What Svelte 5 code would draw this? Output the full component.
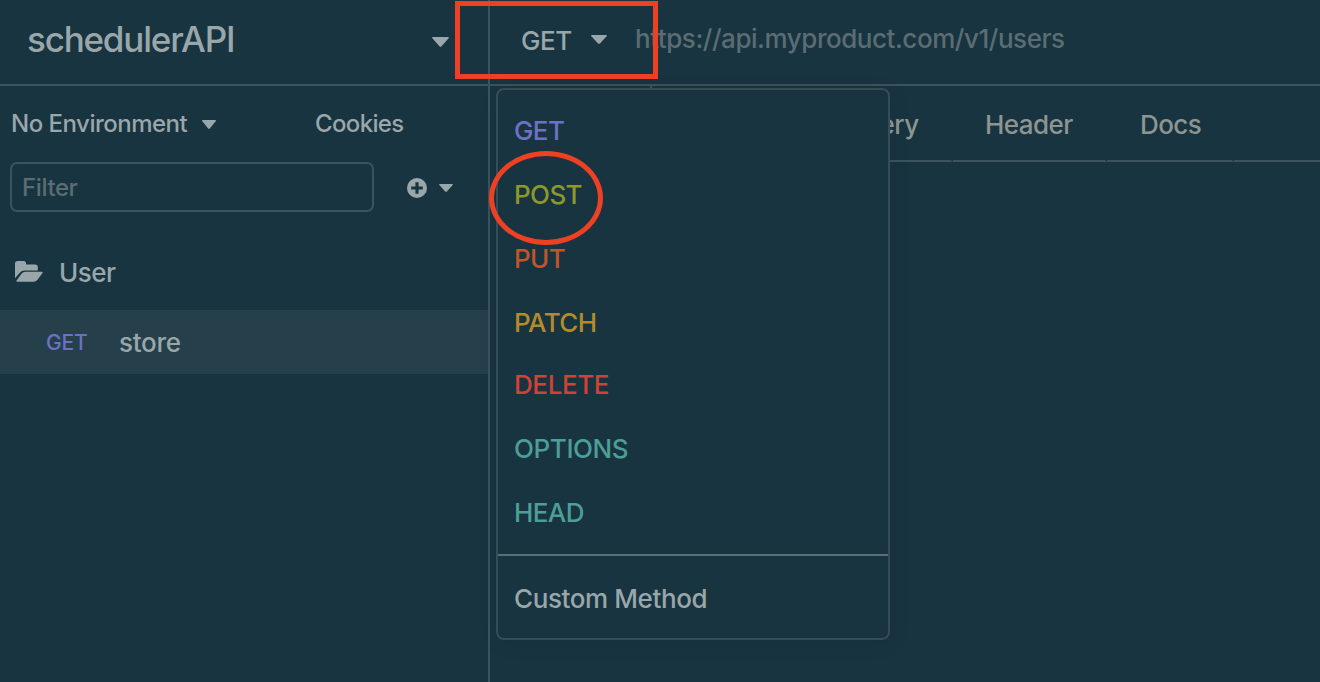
<script>
  const methods = [
    { name: 'GET', color: '#6c71c4', h: 64, ls: -0.6 },
    { name: 'POST', color: '#8c982b', h: 64, ls: -0.6 },
    { name: 'PUT', color: '#c1542b', h: 64, ls: -0.6 },
    { name: 'PATCH', color: '#b38b28', h: 63, ls: -0.6 },
    { name: 'DELETE', color: '#cf4238', h: 62, ls: -0.4 },
    { name: 'OPTIONS', color: '#4d9e97', h: 65, ls: -0.4 },
    { name: 'HEAD', color: '#4d9e97', h: 64, ls: -0.6 }
  ];
</script>

{#snippet caret(w, h)}
  <svg class="caret" width={w} height={h} viewBox="0 0 16 9" preserveAspectRatio="none">
    <path d="M.8 0h14.4q1.2.2.4 1.2L9 8.4q-1 .9-2 0L.4 1.2Q-.4.2.8 0z" />
  </svg>
{/snippet}

<div class="app">
  <aside>
    <header class="workspace">
      <span class="title">schedulerAPI</span>
      {@render caret(17, 10)}
    </header>
    <div class="env">
      <span class="envname">No Environment</span>
      {@render caret(14, 9)}
      <span class="cookies">Cookies</span>
    </div>
    <div class="filter">
      <div class="input">Filter</div>
      <svg class="plus" width="20" height="20" viewBox="0 0 20 20">
        <path fill-rule="evenodd" d="M10 0a10 10 0 1 1 0 20a10 10 0 0 1 0-20zM8.4 4.2v4.2H4.2v3.2h4.2v4.2h3.2v-4.2h4.2V8.4h-4.2V4.2z" />
      </svg>
      {@render caret(14, 8)}
    </div>
    <div class="folder">
      <svg width="28" height="21" viewBox="0 0 28 21">
        <path d="M0 17.3V2.6Q0 0 2.6 0h6Q11 0 11 2.6V3.5h9Q22.8 3.5 22.8 6v3.4H9.5Q6.8 9.4 5 11.4z" />
        <path d="M1.6 19.6L6.7 12.5Q8.2 10.7 10.3 10.7H26.8Q28.3 10.8 27.3 12.2L22.5 18.8Q20.8 20.7 18.7 20.7H2.2Q.8 20.7 1.6 19.6z" />
      </svg>
      <span>User</span>
    </div>
    <div class="request">
      <span class="verb">GET</span>
      <span class="reqname">store</span>
    </div>
  </aside>
  <main>
    <div class="urlbar">
      <span class="method">GET</span>
      {@render caret(16, 9)}
      <span class="url">https://api.myproduct.com/v1/users</span>
    </div>
    <nav>
      <div class="tab body"></div>
      <div class="tab auth"></div>
      <div class="tab query">Query</div>
      <div class="tab head">Header</div>
      <div class="tab docs">Docs</div>
      <div class="rest"></div>
    </nav>
  </main>

  <div class="menu">
    {#each methods as m}
      <div class="item" style="color:{m.color};height:{m.h}px;letter-spacing:{m.ls}px">{m.name}</div>
    {/each}
    <div class="custom">Custom Method</div>
  </div>
  <div class="box"></div>
  <div class="ring"></div>
</div>

<style>
  :global(body) { background: #183440; overflow: hidden; }
  .app {
    position: relative;
    display: flex;
    width: 1320px;
    height: 682px;
    overflow: hidden;
    background: #183440;
    color: #9aa7aa;
    font: 500 26px/32px Inter, "Liberation Sans", sans-serif;
    white-space: nowrap;
  }
  * { box-sizing: border-box; }
  svg { display: block; fill: #9aa7aa; flex: none; }
  aside { width: 490px; border-right: 2px solid #3a535c; flex: none; }
  .workspace {
    height: 86px;
    border-bottom: 2px solid #3a535c;
    display: flex;
    align-items: center;
    justify-content: space-between;
    padding: 0 39px 0 27px;
  }
  .title { font-size: 35px; line-height: 42px; letter-spacing: -1.2px; margin-top: -6px; font-weight: 450; }
  .env { height: 76px; display: flex; align-items: center; padding-left: 11px; font-size: 24px; }
  .envname { width: 191px; letter-spacing: -0.5px; }
  .cookies { margin-left: 99px; letter-spacing: -0.65px; }
  .filter { display: flex; align-items: center; padding-left: 10px; height: 50px; }
  .input {
    width: 364px;
    height: 50px;
    border: 2px solid #3a535c;
    border-radius: 7px;
    padding: 8px 10px 0;
    font-size: 24px;
    letter-spacing: -0.4px;
    color: #5b6d73;
  }
  .plus { margin: 1px 12px 0 33px; }
  .filter .caret { margin-top: 1px; }
  .folder { display: flex; align-items: center; height: 74px; margin-top: 24px; padding-left: 15px; gap: 16px; }
  .folder svg { margin-top: -3px; }
  .request { height: 64px; background: #26404b; display: flex; align-items: center; padding-left: 46px; }
  .verb { font-size: 21px; color: #6c71c4; width: 73px; letter-spacing: -0.2px; padding-top: 1px; }
  .folder { letter-spacing: -0.5px; }
  .request { letter-spacing: -0.3px; }
  .reqname { padding-top: 2px; }
  main { flex: 1; min-width: 0; }
  .urlbar {
    height: 86px;
    border-bottom: 2px solid #3a535c;
    display: flex;
    align-items: center;
    padding: 0 0 6px 31px;
  }
  .method { width: 70px; letter-spacing: -0.4px; padding-top: 3px; }
  .url { margin-left: 28px; color: #5b6d73; letter-spacing: -0.46px; }
  nav { display: flex; height: 76px; color: #8e9591; }
  .tab { border-bottom: 2px solid #3a535c; border-right: 2px solid transparent; padding: 23px 0 0 32px; letter-spacing: -0.55px; }
  .body { width: 162px; border-right-color: #3a535c; border-bottom: none; }
  .auth { width: 146px; }
  .query { width: 155px; padding-left: 47px; }
  .head { width: 154px; }
  .docs { width: 127px; padding-left: 33px; }
  .rest { flex: 1; border-bottom: 2px solid #3a535c; }
  .menu {
    position: absolute;
    left: 496px;
    top: 88px;
    width: 394px;
    height: 552px;
    background: #183440;
    border: 2px solid #344d56;
    border-radius: 8px;
    padding-top: 9px;
    box-shadow: 2px 4px 24px rgba(0, 0, 0, 0.05);
  }
  .item { display: flex; align-items: center; padding-left: 16px; }
  .custom { border-top: 2px solid #5c6e73; padding: 27px 0 0 16px; letter-spacing: -0.4px; margin-top: 9px; }
  .box { position: absolute; left: 455px; top: 1px; width: 203px; height: 78px; border: 5px solid #ee4022; }
  .ring { position: absolute; left: 489px; top: 151px; width: 114px; height: 94px; border: 5px solid #ee4022; border-radius: 50%; }
</style>
